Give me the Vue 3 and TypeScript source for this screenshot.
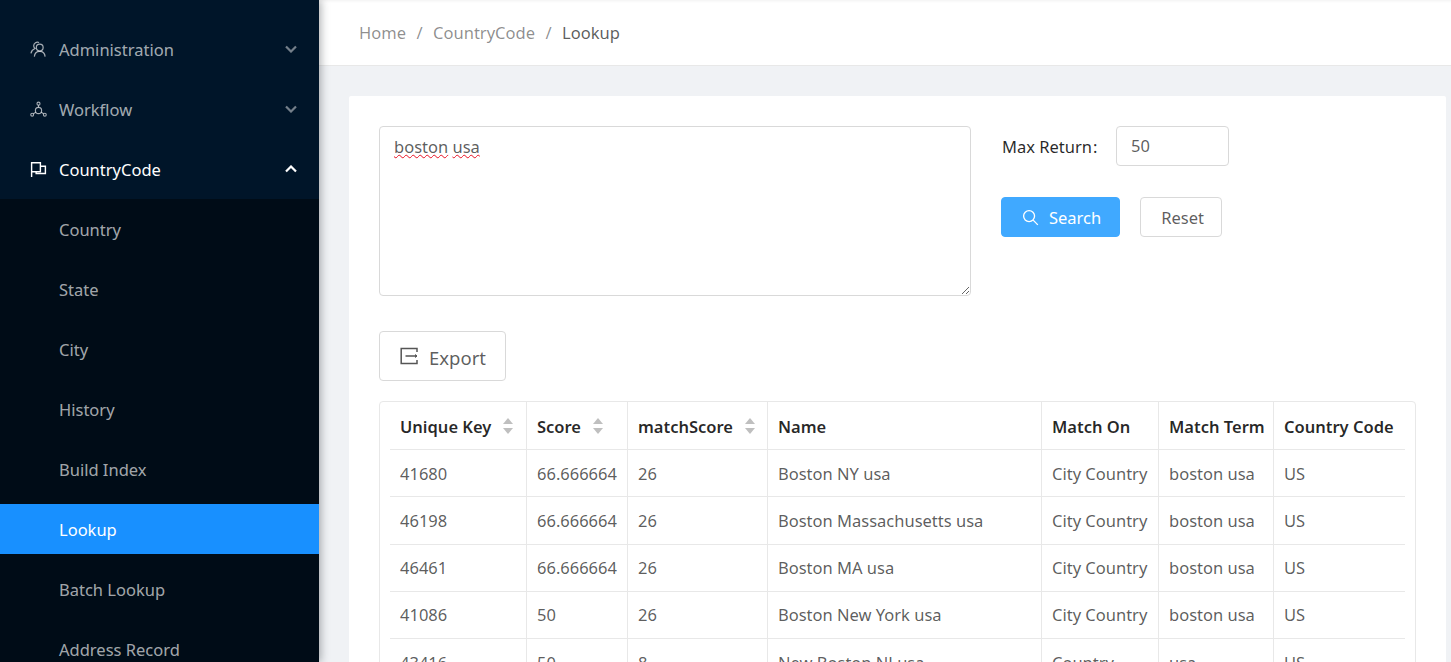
<script setup lang="ts">
interface Row { key: string; score: string; match: string; name: string; on: string; term: string; code: string }
const rows: Row[] = [
  { key: '41680', score: '66.666664', match: '26', name: 'Boston NY usa', on: 'City Country', term: 'boston usa', code: 'US' },
  { key: '46198', score: '66.666664', match: '26', name: 'Boston Massachusetts usa', on: 'City Country', term: 'boston usa', code: 'US' },
  { key: '46461', score: '66.666664', match: '26', name: 'Boston MA usa', on: 'City Country', term: 'boston usa', code: 'US' },
  { key: '41086', score: '50', match: '26', name: 'Boston New York usa', on: 'City Country', term: 'boston usa', code: 'US' },
  { key: '43416', score: '50', match: '8', name: 'New Boston NJ usa', on: 'Country', term: 'usa', code: 'US' },
]
const subItems = ['Country', 'State', 'City', 'History', 'Build Index', 'Lookup', 'Batch Lookup', 'Address Record']
const sortable = [
  { label: 'Unique Key', cls: 'c1' },
  { label: 'Score', cls: 'c2' },
  { label: 'matchScore', cls: 'c3' },
]
const plain = [
  { label: 'Name', cls: 'c4' },
  { label: 'Match On', cls: 'c5' },
  { label: 'Match Term', cls: 'c6' },
  { label: 'Country Code', cls: 'c7' },
]
</script>

<template>
  <div class="layout">
    <aside class="sider">
      <div class="menu-item">
        <svg class="mi" viewBox="0 0 18 18" fill="none" stroke="currentColor" stroke-width="1.3">
          <circle cx="10.3" cy="7" r="3.6" />
          <path d="M4.6 16.5c.3-3.4 2.6-5.6 5.7-5.6s5.4 2.200 5.700 5.600" />
          <path d="M9.600 1.600A4 4 0 0 0 3.900 5c0 1.300.6 2.300 1.400 3C3 9 1.400 10.800 1 13" />
        </svg>
        <span class="ml">Administration</span>
        <svg class="chev" viewBox="0 0 12 8" fill="none" stroke="currentColor" stroke-width="2.200"><path d="M1 1.500l5 5 5-5" /></svg>
      </div>
      <div class="menu-item">
        <svg class="mi" viewBox="0 0 18 18" fill="none" stroke="currentColor" stroke-width="1.200">
          <circle cx="9" cy="2.800" r="1.600" />
          <circle cx="9" cy="10" r="3.300" />
          <circle cx="2.300" cy="14.500" r="1.500" />
          <circle cx="15.700" cy="14.500" r="1.500" />
          <path d="M9 4.400v2.300M3.600 13.600l2.700-1.800M14.400 13.600l-2.700-1.800" />
        </svg>
        <span class="ml">Workflow</span>
        <svg class="chev" viewBox="0 0 12 8" fill="none" stroke="currentColor" stroke-width="2.200"><path d="M1 1.500l5 5 5-5" /></svg>
      </div>
      <div class="menu-item open">
        <svg class="mi" viewBox="0 0 18 18" fill="none" stroke="currentColor" stroke-width="1.500">
          <path d="M1.700 17V1.800h9.300v9.500H1.700" />
          <path d="M11 5.500h5.300v7.800H6.500v-2" />
        </svg>
        <span class="ml">CountryCode</span>
        <svg class="chev" viewBox="0 0 12 8" fill="none" stroke="currentColor" stroke-width="2.200"><path d="M1 6.500l5-5 5 5" /></svg>
      </div>
      <ul class="sub">
        <li v-for="s in subItems" :key="s" :class="{ selected: s === 'Lookup' }">{{ s }}</li>
      </ul>
    </aside>

    <div class="main">
      <header class="topbar">
        <span class="crumb">Home</span><span class="sep">/</span>
        <span class="crumb">CountryCode</span><span class="sep">/</span>
        <span class="crumb last">Lookup</span>
      </header>

      <section class="content">
        <div class="card">
          <div class="form">
            <div class="textarea"><span class="typo">boston</span> <span class="typo">usa</span></div>
            <div class="side">
              <div class="field">
                <span class="field-label">Max Return</span><span class="colon">:</span>
                <div class="input">50</div>
              </div>
              <div class="actions">
                <button class="btn primary" type="button">
                  <svg class="bi" viewBox="0 0 18 18" fill="none" stroke="currentColor" stroke-width="1.400">
                    <circle cx="7.500" cy="7.500" r="5.800" />
                    <path d="M11.800 11.800l5 5" />
                  </svg>
                  Search
                </button>
                <button class="btn reset" type="button">Reset</button>
              </div>
            </div>
          </div>

          <button class="btn export" type="button">
            <svg class="ei" viewBox="0 0 18 18" fill="none" stroke="currentColor" stroke-width="1.500">
              <path d="M17 5V1.500H1.200v15H17V13" />
              <path d="M5.500 9h11" />
              <path d="M15.200 7.500 17 9l-1.800 1.500" fill="currentColor" stroke-width="1" />
            </svg>
            Export
          </button>

          <div class="table-wrap">
            <table>
              <thead>
                <tr>
                  <th v-for="c in sortable" :key="c.label" :class="c.cls">
                    <div class="th-in">
                      <span>{{ c.label }}</span>
                      <span class="sorter"><i class="up"></i><i class="down"></i></span>
                    </div>
                  </th>
                  <th v-for="c in plain" :key="c.label" :class="c.cls">{{ c.label }}</th>
                </tr>
              </thead>
              <tbody>
                <tr v-for="r in rows" :key="r.key">
                  <td>{{ r.key }}</td>
                  <td>{{ r.score }}</td>
                  <td>{{ r.match }}</td>
                  <td>{{ r.name }}</td>
                  <td>{{ r.on }}</td>
                  <td>{{ r.term }}</td>
                  <td>{{ r.code }}</td>
                </tr>
              </tbody>
            </table>
          </div>
        </div>
      </section>
    </div>
  </div>
</template>

<style>
html, body { margin: 0; height: 100%; overflow: hidden; }
</style>

<style scoped>
.layout {
  display: flex;
  height: 662px;
  overflow: hidden;
  font-family: "Noto Sans", "Open Sans", sans-serif;
  font-size: 16.5px;
  background: #f0f2f5;
}
.sider {
  width: 319px;
  flex: none;
  background: #001529;
  padding-top: 24px;
  box-sizing: border-box;
  box-shadow: 2px 0 8px rgba(29, 35, 41, 0.35);
  position: relative;
  z-index: 2;
  overflow: hidden;
  color: rgba(255, 255, 255, 0.65);
}
.menu-item {
  height: 50px;
  margin-bottom: 10px;
  display: flex;
  align-items: center;
  padding: 0 22px 0 30px;
}
.menu-item.open { color: #fff; margin-bottom: 5px; }
.mi { width: 17px; height: 17px; flex: none; margin-top: 1px; }
.ml { margin-left: 12px; flex: 1; }
.chev { width: 12px; height: 8px; opacity: 0.7; margin-top: -1px; }
.open .chev { opacity: 1; }
.sub {
  list-style: none;
  margin: 0;
  padding: 5px 0 0;
  background: #000c17;
}
.sub li {
  height: 50px;
  line-height: 51px;
  margin-bottom: 10px;
  padding-left: 59px;
}
.sub li.selected { background: #1890ff; color: #fff; }

.main { flex: 1; min-width: 0; display: flex; flex-direction: column; }
.topbar {
  height: 66px;
  box-sizing: border-box;
  flex: none;
  background: #fff;
  border-bottom: 1px solid #e8e8e8;
  display: flex;
  align-items: center;
  padding-left: 40px;
  color: rgba(0, 0, 0, 0.45);
  box-shadow: inset 0 3px 3px -2px rgba(0, 0, 0, 0.06);
}
.sep { margin: 0 10.5px; }
.last { color: rgba(0, 0, 0, 0.65); }
.content { padding: 30px 5px 0 30px; }
.card {
  background: #fff;
  border-radius: 2px;
  padding: 30px;
  height: 700px;
  box-sizing: border-box;
}
.form { display: flex; }
.textarea {
  width: 592px;
  height: 170px;
  box-sizing: border-box;
  border: 1px solid #d9d9d9;
  border-radius: 4px;
  padding: 8px 14px;
  line-height: 24px;
  color: rgba(0, 0, 0, 0.65);
  resize: both;
  overflow: auto;
}
.typo {
  text-decoration: underline wavy #e81123 1px;
  text-underline-offset: 1px;
  text-decoration-skip-ink: none;
}
.side { margin-left: 30px; }
.field { display: flex; align-items: center; height: 40px; color: rgba(0, 0, 0, 0.85); margin-left: 1px; }
.field-label { width: 89px; white-space: nowrap; }
.colon { width: 5px; margin: 0 18px 0 2px; }
.input {
  width: 113px;
  height: 40px;
  box-sizing: border-box;
  border: 1px solid #d9d9d9;
  border-radius: 4px;
  padding-left: 14px;
  line-height: 38px;
  color: rgba(0, 0, 0, 0.65);
}
.actions { display: flex; gap: 20px; margin-top: 31px; }
.btn {
  font: inherit;
  height: 40px;
  padding: 0 20px;
  border: 1px solid #d9d9d9;
  border-radius: 4px;
  background: #fff;
  color: rgba(0, 0, 0, 0.65);
  display: inline-flex;
  align-items: center;
  box-sizing: border-box;
}
.primary { background: #40a9ff; border-color: #40a9ff; color: #fff; padding: 0 18px 0 20px; }
.reset { width: 82px; padding: 0 0 0 20px; }
.bi { width: 17px; height: 17px; margin-right: 10px; flex: none; }
.export {
  height: 50px;
  width: 127px;
  margin-top: 35px;
  font-size: 18.500px;
  display: flex;
  justify-content: flex-start;
  padding: 2px 0 0 20px;
}
.ei { width: 18px; height: 18px; margin: -3px 11px 0 0; color: #555; flex: none; }
.table-wrap {
  margin-top: 20px;
  border: 1px solid #e8e8e8;
  border-radius: 4px;
  padding: 0 10px;
  width: 1037px;
  box-sizing: border-box;
}
table {
  border-collapse: separate;
  border-spacing: 0;
  table-layout: fixed;
  width: 1015px;
}
th, td {
  box-sizing: border-box;
  height: 47.25px;
  padding: 0 10px;
  text-align: left;
  border-bottom: 1px solid #e8e8e8;
  border-right: 1px solid #e8e8e8;
  white-space: nowrap;
  overflow: hidden;
}
th:last-child, td:last-child { border-right: 0; }
th { color: rgba(0, 0, 0, 0.85); font-weight: 600; height: 48px; padding-top: 1px; }
td { color: rgba(0, 0, 0, 0.65); }
.c1 { width: 137px; }
.c2 { width: 101px; }
.c3 { width: 140px; }
.c4 { width: 274px; }
.c5 { width: 117px; }
.c6 { width: 115px; }
.c7 { width: 131px; }
.th-in { display: flex; align-items: center; }
.sorter { display: flex; flex-direction: column; gap: 4px; margin-left: 12px; }
.sorter i { display: block; width: 0; height: 0; border-left: 5px solid transparent; border-right: 5px solid transparent; }
.up { border-bottom: 6px solid #bfbfbf; }
.down { border-top: 6px solid #bfbfbf; }
</style>
